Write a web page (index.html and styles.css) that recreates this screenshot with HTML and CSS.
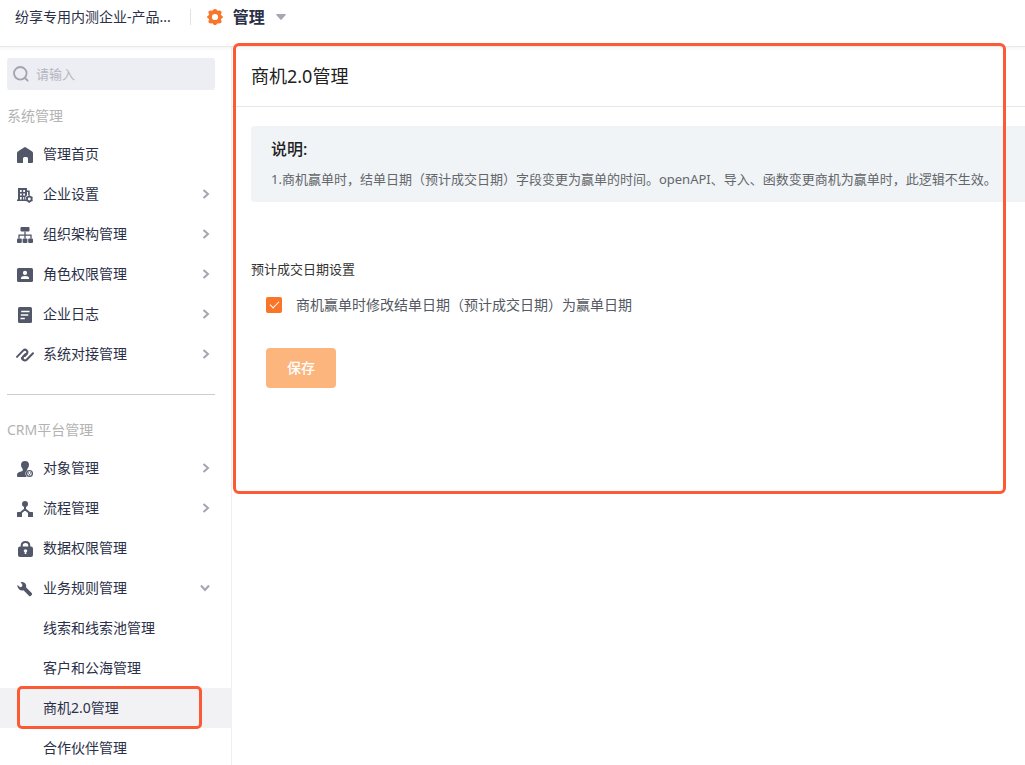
FILE: index.html
```html
<!DOCTYPE html>
<html lang="zh-CN">
<head>
<meta charset="utf-8">
<meta name="viewport" content="width=device-width, initial-scale=1">
<title>商机2.0管理</title>
<link rel="stylesheet" href="styles.css">
</head>
<body>
<header class="topbar">
  <span class="company">纷享专用内测企业-产品...</span>
  <button class="switcher" type="button">
    <svg class="gear" viewBox="0 0 16 16" aria-hidden="true"><path fill-rule="evenodd" d="M8 0q1 0 1.500.5l1.200 1.200 1.900-.1q1.200 0 1.700.8.5.8.2 1.700l-.7 1.700 1.500 1.100q.7.5.7 1.100t-.7 1.100l-1.500 1.100.7 1.700q.3.900-.2 1.700-.5.800-1.700.8l-1.900-.1-1.200 1.200Q9 16 8 16t-1.500-.5l-1.200-1.200-1.900.1q-1.200 0-1.700-.8-.5-.8-.2-1.700l.7-1.700L.7 9.100Q0 8.600 0 8t.7-1.100l1.500-1.100-.7-1.700q-.3-.9.2-1.700.5-.8 1.700-.8l1.900.1L6.500.5Q7 0 8 0zm0 4.900a3.100 3.100 0 1 0 0 6.200 3.100 3.100 0 0 0 0-6.200z"/></svg>
    <span>管理</span>
    <svg class="caret" viewBox="0 0 10 6" aria-hidden="true"><path d="M.8 0h8.400q1.100 0 .4.900L5.700 5.600q-.7.700-1.400 0L.4.900Q-.3 0 .8 0z"/></svg>
  </button>
</header>
<div class="layout">
  <aside class="sidebar">
    <label class="search">
      <svg viewBox="0 0 16 16" aria-hidden="true"><circle cx="7.300" cy="7.300" r="6.300"/><path d="M11.500 11.500l3.700 3.700"/></svg>
      <input type="text" placeholder="请输入" aria-label="搜索">
    </label>
    <h2 class="group-title">系统管理</h2>
    <nav class="menu">
      <a class="item" href="#"><svg class="icon" viewBox="0 0 16 16" aria-hidden="true"><path d="M7 .4q1-.6 2 0l6.200 4.100q.8.5.8 1.500v9q0 1-1 1h-4v-4.500q0-1.500-1.500-1.500h-2Q6 10 6 11.500V16H1q-1 0-1-1V6q0-1 .8-1.500z"/></svg><span>管理首页</span></a>
      <button class="item" type="button"><svg class="icon" viewBox="0 0 16 16" aria-hidden="true"><path fill-rule="evenodd" d="M1 1h9v2.500h2.700V8h-1.600V5H10v3.200L8.300 10v2.600H9V14H0v-1.400h1zM3 3v2h1.700V3zm3.200 0v2H8V3zM3 6.500v2h1.700v-2zm3.200 0v2H8v-2zM3 10v2.600h1.700V10zm3.200 0v2.600h1V10z"/><circle class="cog" cx="12.300" cy="12" r="2.300"/><path class="cog" d="M12.300 8.300v1.400M12.300 14.300v1.400M9.100 10.200l1.200.7M14.300 13.100l1.200.7M9.100 13.800l1.200-.7M14.300 10.900l1.200-.7"/></svg><span>企业设置</span><svg class="chevron" viewBox="0 0 8 10" aria-hidden="true"><path d="M1.500 1l4.500 4-4.500 4"/></svg></button>
      <button class="item" type="button"><svg class="icon" viewBox="0 0 16 16" aria-hidden="true"><rect x="3.500" y="0" width="9" height="4.500" rx="1"/><rect x="0" y="11.500" width="4.800" height="4.500" rx="1"/><rect x="5.600" y="11.500" width="4.800" height="4.500" rx="1"/><rect x="11.200" y="11.500" width="4.800" height="4.500" rx="1"/><path class="line" d="M8 4.500v7M2 11.500V8.200h12v3.300"/></svg><span>组织架构管理</span><svg class="chevron" viewBox="0 0 8 10" aria-hidden="true"><path d="M1.500 1l4.500 4-4.500 4"/></svg></button>
      <button class="item" type="button"><svg class="icon" viewBox="0 0 16 16" aria-hidden="true"><rect y="1" width="16" height="14" rx="1.500"/><circle class="cut" cx="8" cy="5.900" r="2.100"/><path class="cut" d="M4 12v-1q0-2 4-2t4 2v1z"/></svg><span>角色权限管理</span><svg class="chevron" viewBox="0 0 8 10" aria-hidden="true"><path d="M1.500 1l4.500 4-4.500 4"/></svg></button>
      <button class="item" type="button"><svg class="icon" viewBox="0 0 16 16" aria-hidden="true"><rect x="1" width="14" height="16" rx="1.500"/><path class="cut-line" d="M4.200 4.500h8.300M3.800 8h7.500M3.500 11.500h4.300"/></svg><span>企业日志</span><svg class="chevron" viewBox="0 0 8 10" aria-hidden="true"><path d="M1.500 1l4.500 4-4.500 4"/></svg></button>
      <button class="item" type="button"><svg class="icon" viewBox="0 0 16 16" aria-hidden="true"><path class="thick" d="M0 9.900L6.300 3.400q1.700-1.500 3.400 0 1.500 1.700 0 3.400L7.600 9M16 6.300l-6.300 6.500q-1.700 1.500-3.400 0-1.500-1.700 0-3.400"/><path class="thick" d="M6.300 9.400l2-2.100M9.700 6.800l-2 2.100"/><path class="thick" d="M4.800 11q0 1.200 1.500 1.800"/></svg><span>系统对接管理</span><svg class="chevron" viewBox="0 0 8 10" aria-hidden="true"><path d="M1.500 1l4.500 4-4.500 4"/></svg></button>
    </nav>
    <hr class="divider">
    <h2 class="group-title">CRM平台管理</h2>
    <nav class="menu">
      <button class="item" type="button"><svg class="icon" viewBox="0 0 16 16" aria-hidden="true"><path d="M8 0q4 0 4 4 0 2.600-1.800 4.200L10 9.500Q8 11 8.500 13.500L9.600 16H1q-1 0-1-1v-1.300q0-1.700 2.400-2.600l3.200-1.200.1-1.800Q4 6.500 4 4q0-4 4-4z"/><circle class="line" cx="12.500" cy="12.500" r="2.900"/><circle cx="11.400" cy="12" r=".7"/><circle cx="13.600" cy="12" r=".7"/><circle cx="12.500" cy="13.700" r=".7"/></svg><span>对象管理</span><svg class="chevron" viewBox="0 0 8 10" aria-hidden="true"><path d="M1.500 1l4.500 4-4.500 4"/></svg></button>
      <button class="item" type="button"><svg class="icon" viewBox="0 0 16 16" aria-hidden="true"><circle cx="8" cy="3" r="3"/><rect y="11" width="5" height="5" rx=".5"/><rect x="11" y="11" width="5" height="5" rx=".5"/><path class="thick" d="M8 5v3.500M2.500 12.700L8 8.300l5.500 4.400"/></svg><span>流程管理</span><svg class="chevron" viewBox="0 0 8 10" aria-hidden="true"><path d="M1.500 1l4.500 4-4.500 4"/></svg></button>
      <a class="item" href="#"><svg class="icon" viewBox="0 0 16 16" aria-hidden="true"><rect x="1" y="5.500" width="15" height="10.500" rx="2"/><path class="thick" d="M4.700 6V4.500q0-3.500 3.800-3.500t3.800 3.500V6"/><path class="cut" d="M8.500 8.200q1.800 0 1.800 1.600 0 .8-1 1.400V13H7.700v-1.800q-1-.6-1-1.400 0-1.600 1.800-1.600z"/></svg><span>数据权限管理</span></a>
      <button class="item" type="button" aria-expanded="true"><svg class="icon" viewBox="0 0 16 16" aria-hidden="true"><path d="M3.600 1q2.600-.5 4.500 1.300 1.800 1.900 1.100 4.300l5.500 5.300q1 1 0 2l-.8.8q-1 1-2 0L6.500 9.300Q4 10 2 8.200 0 6.200.4 3.700l2.700 2.600 1.700-.5.700-1.900z"/></svg><span>业务规则管理</span><svg class="chevron down" viewBox="0 0 10 8" aria-hidden="true"><path d="M1 1.500l4 4.500 4-4.500"/></svg></button>
      <a class="item sub" href="#">线索和线索池管理</a>
      <a class="item sub" href="#">客户和公海管理</a>
      <a class="item sub current" href="#" aria-current="page">商机2.0管理</a>
      <a class="item sub" href="#">合作伙伴管理</a>
    </nav>
  </aside>
  <main class="main">
    <h1 class="page-title">商机2.0管理</h1>
    <div class="content">
      <section class="notice">
        <h2>说明:</h2>
        <p>1.商机赢单时，结单日期（预计成交日期）字段变更为赢单的时间。openAPI、导入、函数变更商机为赢单时，此逻辑不生效。</p>
      </section>
      <form class="settings">
        <h3>预计成交日期设置</h3>
        <label class="option">
          <input type="checkbox" checked>
          <span>商机赢单时修改结单日期（预计成交日期）为赢单日期</span>
        </label>
        <button class="save" type="button">保存</button>
      </form>
    </div>
    <div class="callout"></div>
  </main>
</div>
</body>
</html>
```

FILE: styles.css
```css
* { box-sizing: border-box; }

body {
  margin: 0;
  height: 100vh;
  display: flex;
  flex-direction: column;
  overflow: hidden;
  background: #fff;
  color: #2b3048;
  font: 14px/20px "Noto Sans", "Noto Sans CJK SC", sans-serif;
}

h1, h2, h3, p { margin: 0; font-weight: 400; }

button, input { font: inherit; color: inherit; }

button {
  border: 0;
  padding: 0;
  background: none;
  cursor: pointer;
}

a { color: inherit; text-decoration: none; }

/* Top bar */
.topbar {
  position: relative;
  flex: none;
  display: flex;
  align-items: center;
  height: 47px;
  padding: 0 15px 12px;
  border-bottom: 1px solid #e9e9eb;
  box-shadow: 0 1px 4px rgba(0, 0, 0, .06);
}

.switcher {
  display: flex;
  align-items: center;
  margin-left: 19px;
  padding-left: 16px;
  height: 16px;
  border-left: 1px solid #dee1e6;
  font-size: 16px;
  font-weight: 700;
}

.gear { width: 16px; height: 16px; margin-right: 10px; fill: #f9752a; }
.caret { width: 10px; height: 6px; margin-left: 11px; fill: #a4a8b3; }

/* Sidebar */
.layout { flex: 1; display: flex; min-height: 0; }

.sidebar {
  flex: none;
  width: 232px;
  padding-top: 11px;
  overflow: hidden;
  border-right: 1px solid #f0f0f2;
}

.search {
  display: flex;
  align-items: center;
  gap: 7px;
  height: 32px;
  margin: 0 16px 0 7px;
  padding: 0 6px;
  border-radius: 3px;
  background: #edeef4;
}

.search svg {
  flex: none;
  width: 16px;
  height: 16px;
  fill: none;
  stroke: #a1a5b0;
  stroke-width: 1.8;
}

.search input {
  flex: 1;
  min-width: 0;
  padding: 0;
  border: 0;
  outline: 0;
  background: none;
  font-size: 13px;
}

.search input::placeholder { color: #b3b6bf; }

.group-title {
  margin: 16px 7px 8px;
  color: #b3b3b3;
  font-size: 14px;
}

.item {
  display: flex;
  align-items: center;
  width: 100%;
  height: 40px;
  padding: 0 21px 0 17px;
  text-align: left;
}

.sub { padding-left: 43px; }

.current {
  position: relative;
  background: #f2f2f5;
}

.current::after {
  content: "";
  position: absolute;
  inset: -2px 29px -1px 17px;
  border: 3px solid #fb5a35;
  border-radius: 5px;
}

.icon {
  width: 16px;
  height: 16px;
  margin: 2px 10px 0 0;
  overflow: visible;
  fill: #525769;
}

.line { fill: none; stroke: #525769; stroke-width: 1.3; }
.cog { fill: none; stroke: #525769; stroke-width: 1.7; }
.thick { fill: none; stroke: #525769; stroke-width: 2; stroke-linecap: round; }
.cut { fill: #fff; }
.cut-line { fill: none; stroke: #fff; stroke-width: 1.5; }

.chevron {
  width: 8px;
  height: 10px;
  margin-left: auto;
  fill: none;
  stroke: #a3a6b0;
  stroke-width: 2;
}

.down { width: 10px; height: 8px; }

.divider {
  height: 1px;
  margin: 20px 16px 25px 7px;
  border: 0;
  background: #ccc;
}

/* Main area */
.main {
  position: relative;
  flex: 1;
  min-width: 0;
}

.page-title {
  height: 60px;
  padding: 0 19px;
  border-bottom: 1px solid #e6e7e9;
  color: #212121;
  font-size: 18px;
  line-height: 59px;
}

.content { padding: 19px 0 0 19px; }

.notice {
  padding: 13px 20px;
  border-radius: 4px 0 0 4px;
  background: #f0f4f7;
  color: #646669;
}

.notice h2 {
  margin-bottom: 10px;
  color: #212121;
  font-size: 16px;
  font-weight: 500;
}

.notice p { font-size: 13px; white-space: nowrap; }

.settings { padding-top: 57px; }

.settings h3 { color: #333; font-size: 13px; }

.option {
  display: flex;
  align-items: center;
  gap: 14px;
  margin: 16px 0 33px 15px;
  color: #545861;
}

.option input {
  appearance: none;
  display: grid;
  place-items: center;
  width: 16px;
  height: 16px;
  margin: 0;
  border-radius: 2px;
  background: #f97528;
}

.option input:checked::before {
  content: "";
  width: 8px;
  height: 4px;
  margin-bottom: 4px;
  border: solid #fff;
  border-width: 0 0 1px 1px;
  transform: rotate(-45deg);
}

.save {
  width: 70px;
  height: 40px;
  margin-left: 15px;
  border-radius: 4px;
  background: #fcb57d;
  color: #fff;
  font-weight: 500;
}

.callout {
  position: absolute;
  z-index: 1;
  inset: -4px 19px auto 1px;
  height: 451px;
  border: 3px solid #fb5a35;
  border-radius: 6px;
  pointer-events: none;
}
```
